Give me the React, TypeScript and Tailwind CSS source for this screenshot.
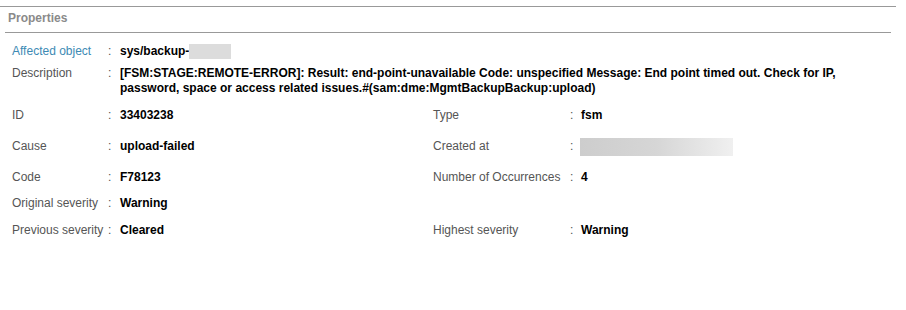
export default function App() {
  const left = "w-[421px] flex shrink-0";
  return (
    <div className="w-[906px] h-[310px] bg-white pt-[6px] text-[12px] leading-[15px] text-[#555]" style={{ fontFamily: '"Liberation Sans", Arial, sans-serif' }}>
      <div className="w-[896px] border-t border-[#999]">
        {/* Header */}
        <div className="mx-[5px] h-[26px] border-b border-[#999] flex items-center pl-[3px] pb-[3px]">
          <span className="font-bold text-[12px] text-[#8a8a8a]">Properties</span>
        </div>

        {/* Body */}
        <div className="pl-[12px] pt-[11px]">
          <div className="flex h-[22px]">
            <span className="w-[96px] text-[#3d8ab4]">Affected object</span>
            <span className="w-[12px]">:</span>
            <span className="font-bold text-black flex">
              sys/backup-
              <span className="inline-block w-[42px] h-[15px] bg-[#dcdcdc]" />
            </span>
          </div>

          <div className="flex h-[42px]">
            <span className="w-[96px] shrink-0">Description</span>
            <span className="w-[12px] shrink-0">:</span>
            <span className="font-bold text-black w-[760px]">
              [FSM:STAGE:REMOTE-ERROR]: Result: end-point-unavailable Code: unspecified Message: End point timed out. Check for IP, password, space or access related issues.#(sam:dme:MgmtBackupBackup:upload)
            </span>
          </div>

          <div className="flex h-[31px]">
            <div className={left}>
              <span className="w-[96px]">ID</span>
              <span className="w-[12px]">:</span>
              <span className="font-bold text-black">33403238</span>
            </div>
            <div className="flex">
              <span className="w-[137px]">Type</span>
              <span className="w-[11px]">:</span>
              <span className="font-bold text-black">fsm</span>
            </div>
          </div>

          <div className="flex h-[31px]">
            <div className={left}>
              <span className="w-[96px]">Cause</span>
              <span className="w-[12px]">:</span>
              <span className="font-bold text-black">upload-failed</span>
            </div>
            <div className="flex">
              <span className="w-[137px]">Created at</span>
              <span className="w-[10px]">:</span>
              <span className="w-[153px] h-[18px] -mt-[1px] bg-gradient-to-r from-[#cdcdcd] via-[#d6d6d6] to-[#f0f0f0]" />
            </div>
          </div>

          <div className="flex h-[26px]">
            <div className={left}>
              <span className="w-[96px]">Code</span>
              <span className="w-[12px]">:</span>
              <span className="font-bold text-black">F78123</span>
            </div>
            <div className="flex">
              <span className="w-[137px]">Number of Occurrences</span>
              <span className="w-[11px]">:</span>
              <span className="font-bold text-black">4</span>
            </div>
          </div>

          <div className="flex h-[27px]">
            <div className={left}>
              <span className="w-[96px]">Original severity</span>
              <span className="w-[12px]">:</span>
              <span className="font-bold text-black">Warning</span>
            </div>
          </div>

          <div className="flex h-[27px]">
            <div className={left}>
              <span className="w-[96px]">Previous severity</span>
              <span className="w-[12px]">:</span>
              <span className="font-bold text-black">Cleared</span>
            </div>
            <div className="flex">
              <span className="w-[137px]">Highest severity</span>
              <span className="w-[11px]">:</span>
              <span className="font-bold text-black">Warning</span>
            </div>
          </div>
        </div>
      </div>
    </div>
  );
}
